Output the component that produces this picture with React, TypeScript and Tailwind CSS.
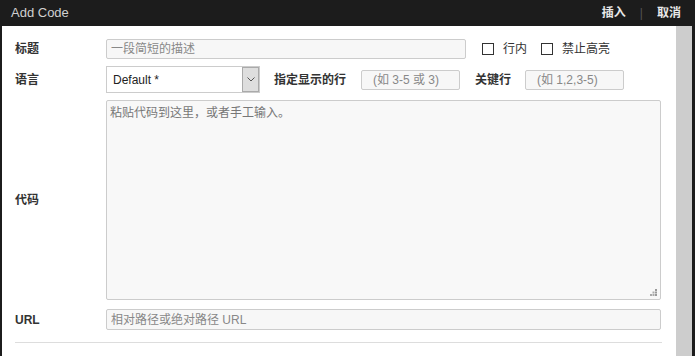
import React from "react";

const font = { fontFamily: '"Liberation Sans", "Noto Sans CJK SC", sans-serif' };

const Checkbox = ({ label }: { label: string }) => (
  <label className="flex items-center gap-[9px] text-[12px] text-[#333]">
    <span className="w-[12px] h-[12px] border border-[#333] bg-white" />
    {label}
  </label>
);

const App = () => {
  return (
    <div className="w-[695px] h-[356px] bg-[#1c1c1c] flex flex-col overflow-hidden" style={font}>
      {/* header */}
      <div className="h-[26px] flex items-center justify-between pl-[11px] pr-[14px]">
        <span className="text-[13px] text-[#d0d0d0]">Add Code</span>
        <div className="flex items-center text-[12px] font-bold text-[#e8e8e8]">
          <span>插入</span>
          <span className="mx-[14px] text-[#555] font-normal">|</span>
          <span>取消</span>
        </div>
      </div>

      <div className="flex flex-1 pl-[2px] pr-[3px]">
        {/* content */}
        <div className="flex-1 bg-white pl-[13px] pr-[14px] pt-[13px]">
          <div className="flex items-center h-[20px]">
            <span className="w-[91px] text-[12px] font-bold text-[#333]">标题</span>
            <input
              className="w-[360px] h-[20px] px-[4px] text-[12px] bg-[#f7f7f7] border border-[#ccc] rounded-[2px] outline-none placeholder:text-[#888]"
              placeholder="一段简短的描述"
            />
            <div className="ml-[16px] flex items-center gap-[14px]">
              <Checkbox label="行内" />
              <Checkbox label="禁止高亮" />
            </div>
          </div>

          <div className="flex items-center mt-[7px] h-[27px]">
            <span className="w-[91px] text-[12px] font-bold text-[#333]">语言</span>
            <div className="w-[154px] h-[27px] border border-[#ccc] flex items-stretch bg-white">
              <span className="flex-1 flex items-center pl-[6px] text-[12px] text-[#222]">Default *</span>
              <span className="w-[17px] border border-[#aaa] bg-[#dedede] flex items-center justify-center">
                <svg width="8" height="5" viewBox="0 0 8 5">
                  <path d="M0.5 0.5 L4 4 L7.5 0.5" fill="none" stroke="#555" strokeWidth="1" />
                </svg>
              </span>
            </div>
            <span className="ml-[14px] text-[12px] font-bold text-[#333]">指定显示的行</span>
            <input
              className="ml-[15px] w-[99px] h-[20px] px-[11px] text-[12px] bg-[#f7f7f7] border border-[#ccc] rounded-[2px] outline-none placeholder:text-[#888]"
              placeholder="(如 3-5 或 3)"
            />
            <span className="ml-[15px] text-[12px] font-bold text-[#333]">关键行</span>
            <input
              className="ml-[14px] w-[99px] h-[20px] px-[11px] text-[12px] bg-[#f7f7f7] border border-[#ccc] rounded-[2px] outline-none placeholder:text-[#888]"
              placeholder="(如 1,2,3-5)"
            />
          </div>

          <div className="flex items-center mt-[7px]">
            <span className="w-[91px] text-[12px] font-bold text-[#333]">代码</span>
            <div className="relative">
              <textarea
                className="block w-[555px] h-[200px] px-[3px] py-[3px] text-[12px] bg-[#f8f8f8] border border-[#ccc] rounded-[2px] outline-none resize-none placeholder:text-[#777]"
                placeholder="粘贴代码到这里，或者手工输入。"
              />
              {/* resize grip */}
              <svg className="absolute right-[4px] bottom-[4px]" width="7" height="7" viewBox="0 0 7 7">
                <rect x="5" y="0" width="2" height="2" fill="#999" />
                <rect x="2.5" y="2.5" width="2" height="2" fill="#aaa" />
                <rect x="5" y="2.5" width="2" height="2" fill="#999" />
                <rect x="0" y="5" width="2" height="2" fill="#aaa" />
                <rect x="2.5" y="5" width="2" height="2" fill="#aaa" />
                <rect x="5" y="5" width="2" height="2" fill="#999" />
              </svg>
            </div>
          </div>

          <div className="flex items-center mt-[9px] h-[21px]">
            <span className="w-[91px] text-[12px] font-bold text-[#333]">URL</span>
            <input
              className="w-[555px] h-[21px] px-[4px] text-[12px] bg-[#f7f7f7] border border-[#ccc] rounded-[2px] outline-none placeholder:text-[#888]"
              placeholder="相对路径或绝对路径 URL"
            />
          </div>

          <div className="mt-[12px] border-t border-[#ddd]" />
        </div>
        {/* scrollbar */}
        <div className="w-[16px] bg-[#cdcdcd]" />
      </div>
    </div>
  );
};

export default App;
